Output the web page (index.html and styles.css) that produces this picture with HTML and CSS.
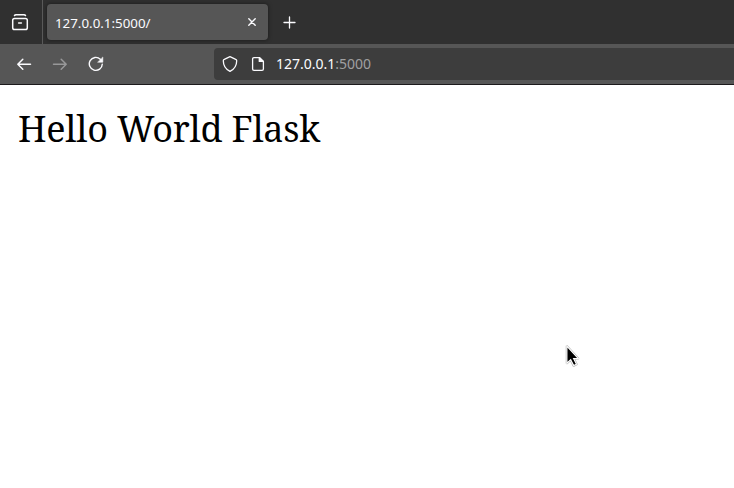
FILE: index.html
```html
<!DOCTYPE html>
<html lang="en">
<head>
<meta charset="utf-8">
<title>127.0.0.1:5000/</title>
<link rel="stylesheet" href="styles.css">
</head>
<body>
<header class="tabs">
  <div class="view">
    <svg width="20" height="20" viewBox="0 0 20 20" fill="none" stroke="#fbfbfe" stroke-width="1.5" stroke-linecap="round" stroke-linejoin="round"><path d="M4.500 3.500Q5 2.700 6 2.700h8q1 0 1.500.8"/><rect x="2.700" y="6.500" width="14.600" height="11" rx="1.800"/><path d="M8.600 10.900h2.800"/></svg>
  </div>
  <div class="tab">
    <span class="tab-title">127.0.0.1:5000/</span>
    <svg width="10" height="10" viewBox="0 0 10 10" fill="none" stroke="#fbfbfe" stroke-width="1.4" stroke-linecap="round"><path d="M1.800 1.800l6.400 6.400M8.200 1.800L1.800 8.200"/></svg>
  </div>
  <svg class="new-tab" width="14" height="14" viewBox="0 0 14 14" fill="none" stroke="#fbfbfe" stroke-width="1.3" stroke-linecap="round"><path d="M7.500 2v11M2 7.500h11"/></svg>
</header>
<nav class="toolbar">
  <div class="buttons">
    <svg width="16" height="16" viewBox="0 0 16 16" fill="none" stroke="#fbfbfe" stroke-width="1.5" stroke-linecap="round" stroke-linejoin="round"><path d="M14.500 8.200H1.800M6.800 3.200l-5 5 5 5"/></svg>
    <svg class="disabled" width="16" height="16" viewBox="0 0 16 16" fill="none" stroke="#fbfbfe" stroke-width="1.5" stroke-linecap="round" stroke-linejoin="round"><path d="M1.500 8.200h12.700M9.200 3.200l5 5-5 5"/></svg>
    <svg width="16" height="16" viewBox="0 0 16 16" fill="none" stroke="#fbfbfe" stroke-width="1.4" stroke-linecap="round"><path d="M12.300 3.200a6.500 6.500 0 1 0 2 4.900"/><path d="M14.800 1.400v4.800H10z" fill="#fbfbfe" stroke-width=".6" stroke-linejoin="round"/></svg>
  </div>
  <div class="url">
    <svg class="shield" width="16" height="16" viewBox="0 0 16 16" fill="none" stroke="#fbfbfe" stroke-width="1.300" stroke-linejoin="round"><path d="M8 .7l5.700 2.600q1 .4 1 1.400c0 4.100-2.200 8.400-6.700 10.600C3.500 13.100 1.300 8.800 1.300 4.700q0-1 1-1.400z"/></svg>
    <svg class="page" width="16" height="16" viewBox="0 0 16 16" fill="none" stroke="#fbfbfe" stroke-width="1.300" stroke-linejoin="round"><path d="M9.500 1.600H4q-1.400 0-1.400 1.400v10q0 1.400 1.400 1.400h8q1.400 0 1.400-1.400V5.500z"/><path d="M9.300 1.600v3.800h4.100z" fill="#fbfbfe"/></svg>
    <span class="address">127.0.0.1<span class="port">:5000</span></span>
  </div>
</nav>
<main class="content">
  <h1 class="heading">Hello World Flask</h1>
  <svg class="cursor" width="17" height="25" viewBox="0 0 18 26"><path d="M2 1v18l4-3.700 3.200 6.300 3-1.400-3.100-6.200h4.800z" fill="#000" stroke="#b4b4b4" stroke-width="2.400" stroke-linejoin="round"/><path d="M2 1v18l4-3.700 3.200 6.300 3-1.400-3.100-6.200h4.800z" fill="#000" stroke="#fff" stroke-width="1.200"/></svg>
</main>
</body>
</html>
```
FILE: styles.css
```css
* { box-sizing: border-box; }
body {
  margin: 0;
  height: 488px;
  overflow: hidden;
  background: #fff;
  font-family: "Noto Sans", sans-serif;
  color: #fbfbfe;
}
svg { display: block; flex: none; }
.tabs {
  height: 44px;
  display: flex;
  align-items: center;
  background: #303030;
}
.view {
  width: 43px;
  height: 44px;
  padding: 12px 0 0 10px;
  border-right: 1px solid #5a5a5a;
}
.tab {
  width: 221px;
  height: 36px;
  margin-left: 4px;
  padding: 0 11px 0 8px;
  display: flex;
  align-items: center;
  justify-content: space-between;
  border-radius: 4px;
  background: #565656;
  box-shadow: 0 0 4px rgba(0, 0, 0, .5);
}
.tab-title {
  font-size: 13.33px;
  line-height: 18px;
  padding-top: 2px;
}
.new-tab { margin-left: 14px; }
.toolbar {
  height: 41px;
  display: flex;
  background: #565656;
  border-bottom: 1px solid #1c191b;
}
.buttons {
  width: 214px;
  height: 40px;
  padding-left: 16px;
  display: flex;
  align-items: center;
  gap: 20px;
}
.disabled { opacity: .4; }
.url {
  flex: 1;
  height: 32px;
  margin-top: 4px;
  padding-left: 8px;
  display: flex;
  align-items: center;
  background: #3d3d3d;
  border-radius: 4px 0 0 4px;
}
.page { margin-left: 12px; }
.address {
  margin-left: 10px;
  font-size: 14px;
  line-height: 20px;
}
.port { color: #a0a0a1; }
.content {
  position: relative;
  height: 403px;
  padding: 19px 0 0 18px;
  color: #000;
}
.heading {
  margin: 0;
  font: 400 36px/50px "Noto Serif", "DejaVu Serif", serif;
  letter-spacing: -.23px;
  white-space: nowrap;
}
.cursor {
  position: absolute;
  left: 565px;
  top: 260px;
}
```
